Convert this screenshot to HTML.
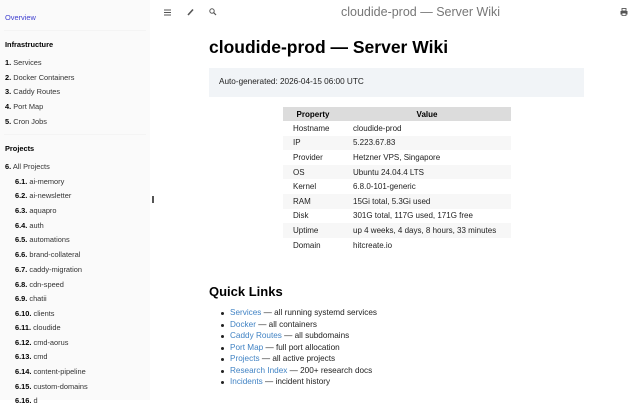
<!DOCTYPE html>
<html><head><meta charset="utf-8"><style>
*{margin:0;padding:0;box-sizing:border-box}
body{width:640px;height:400px;overflow:hidden;background:#fff;font-family:"Liberation Sans",sans-serif;color:#000;position:relative}
.sb{position:absolute;left:0;top:0;width:150px;height:400px;background:#fafafa;font-size:7.4px;color:#333}
.sb div{position:absolute;white-space:nowrap}
.sb b{color:#000}
.sep{position:absolute;left:4px;width:142px;height:1px;background:#f4f4f4}
.a{color:#4040d0}
.main{position:absolute;left:150px;top:0;width:490px;height:400px}
.abs{position:absolute;white-space:nowrap}
table{position:absolute;left:133px;top:107px;width:228px;border-collapse:collapse;font-size:8px;color:#222;table-layout:fixed}
th{background:#dcdcdc;height:14px;font-weight:bold;color:#000}
td{height:14.6px;padding-left:10px}
tr:nth-child(odd) td{background:#f7f7f7}
ul{position:absolute;left:80px;top:308px;font-size:8.2px;color:#222;list-style:none}
li{height:11.5px;position:relative}
li:before{content:"";position:absolute;left:-9px;top:4px;width:3px;height:3px;border-radius:50%;background:#222}
li a{color:#4183c4;text-decoration:none}
</style></head><body>
<div class="sb">
<div class="a" style="left:5px;top:13px">Overview</div>
<div class="sep" style="top:30px"></div>
<div style="left:5px;top:40px"><b>Infrastructure</b></div>
<div style="left:5px;top:58px"><b>1.</b> Services</div>
<div style="left:5px;top:73px"><b>2.</b> Docker Containers</div>
<div style="left:5px;top:87px"><b>3.</b> Caddy Routes</div>
<div style="left:5px;top:102px"><b>4.</b> Port Map</div>
<div style="left:5px;top:117px"><b>5.</b> Cron Jobs</div>
<div class="sep" style="top:134px"></div>
<div style="left:5px;top:144px"><b>Projects</b></div>
<div style="left:5px;top:162px"><b>6.</b> All Projects</div>
<div style="left:15px;top:177px"><b>6.1.</b> ai-memory</div>
<div style="left:15px;top:191px"><b>6.2.</b> ai-newsletter</div>
<div style="left:15px;top:206px"><b>6.3.</b> aquapro</div>
<div style="left:15px;top:221px"><b>6.4.</b> auth</div>
<div style="left:15px;top:235px"><b>6.5.</b> automations</div>
<div style="left:15px;top:250px"><b>6.6.</b> brand-collateral</div>
<div style="left:15px;top:265px"><b>6.7.</b> caddy-migration</div>
<div style="left:15px;top:280px"><b>6.8.</b> cdn-speed</div>
<div style="left:15px;top:294px"><b>6.9.</b> chatii</div>
<div style="left:15px;top:309px"><b>6.10.</b> clients</div>
<div style="left:15px;top:323px"><b>6.11.</b> cloudide</div>
<div style="left:15px;top:338px"><b>6.12.</b> cmd-aorus</div>
<div style="left:15px;top:352px"><b>6.13.</b> cmd</div>
<div style="left:15px;top:367px"><b>6.14.</b> content-pipeline</div>
<div style="left:15px;top:382px"><b>6.15.</b> custom-domains</div>
<div style="left:15px;top:396px"><b>6.16.</b> d</div>
</div>
<div style="position:absolute;left:152px;top:196px;width:2px;height:7px;background:#555"></div>
<div class="main">
<svg class="abs" style="left:14px;top:9px" width="8" height="7"><path d="M0 1h7M0 3.5h7M0 6h7" stroke="#555" stroke-width="1.1"/></svg>
<svg class="abs" style="left:37px;top:8px" width="8" height="8"><path d="M1 7L6 1.5" stroke="#555" stroke-width="1.6"/></svg>
<svg class="abs" style="left:59px;top:8px" width="8" height="8"><circle cx="3" cy="3" r="2.2" fill="none" stroke="#555" stroke-width="1"/><path d="M4.6 4.6L7 7" stroke="#555" stroke-width="1.2"/></svg>
<div class="abs" style="left:191px;top:5px;font-size:12.5px;color:#777">cloudide-prod — Server Wiki</div>
<svg class="abs" style="left:470px;top:8px" width="8" height="8"><rect x="2" y="0.5" width="4" height="2.5" fill="none" stroke="#555" stroke-width="0.9"/><rect x="0.5" y="3" width="7" height="3.5" fill="#555"/><rect x="2" y="5" width="4" height="2.5" fill="#fff" stroke="#555" stroke-width="0.8"/></svg>
<div class="abs" style="left:59px;top:37px;font-size:17.5px;font-weight:bold">cloudide-prod — Server Wiki</div>
<div class="abs" style="left:59px;top:68px;width:375px;height:29px;background:#f1f4f7"></div>
<div class="abs" style="left:69px;top:77px;font-size:8.2px;color:#222">Auto-generated: 2026-04-15 06:00 UTC</div>
<table>
<colgroup><col style="width:60px"><col></colgroup>
<tr><th>Property</th><th>Value</th></tr>
<tr><td>Hostname</td><td>cloudide-prod</td></tr>
<tr><td>IP</td><td>5.223.67.83</td></tr>
<tr><td>Provider</td><td>Hetzner VPS, Singapore</td></tr>
<tr><td>OS</td><td>Ubuntu 24.04.4 LTS</td></tr>
<tr><td>Kernel</td><td>6.8.0-101-generic</td></tr>
<tr><td>RAM</td><td>15Gi total, 5.3Gi used</td></tr>
<tr><td>Disk</td><td>301G total, 117G used, 171G free</td></tr>
<tr><td>Uptime</td><td>up 4 weeks, 4 days, 8 hours, 33 minutes</td></tr>
<tr><td>Domain</td><td>hitcreate.io</td></tr>
</table>
<div class="abs" style="left:59px;top:284px;font-size:13px;font-weight:bold">Quick Links</div>
<ul>
<li><a>Services</a> — all running systemd services</li>
<li><a>Docker</a> — all containers</li>
<li><a>Caddy Routes</a> — all subdomains</li>
<li><a>Port Map</a> — full port allocation</li>
<li><a>Projects</a> — all active projects</li>
<li><a>Research Index</a> — 200+ research docs</li>
<li><a>Incidents</a> — incident history</li>
</ul>
</div>
</body></html>
